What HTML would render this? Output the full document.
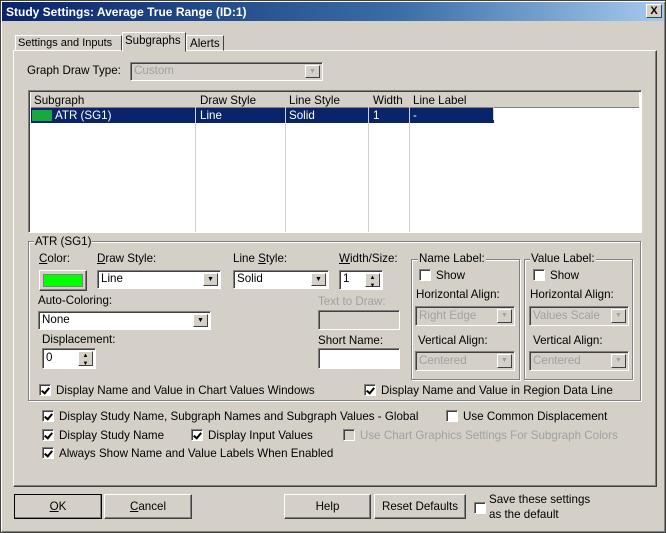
<!DOCTYPE html><html><head><style>
*{box-sizing:border-box;margin:0;padding:0}
body{width:666px;height:533px;background:#d4d0c8;font-family:"Liberation Sans",Arial,sans-serif;font-size:11.6px;color:#000;position:relative;overflow:hidden}
.a{position:absolute;white-space:nowrap}
.win{position:absolute;left:0;top:0;width:666px;height:533px;border:1px solid #404040;box-shadow:inset 1px 1px #fff,inset -1px -1px #808080}
.title{left:2px;top:2px;width:662px;height:19px;background:linear-gradient(90deg,#0a246a,#3a6ea5 60%,#a6caf0);color:#fff;font-weight:bold;font-size:12px;padding:3px 4px}
.close{left:646px;top:4px;width:16px;height:14px;background:#d4d0c8;border:1px solid;border-color:#fff #404040 #404040 #fff;font-size:11px;font-weight:bold;text-align:center;line-height:12px}
.raised{border:1px solid;border-color:#fff #404040 #404040 #fff;box-shadow:inset -1px -1px #808080}
.sunk{background:#fff;border:1px solid;border-color:#808080 #fff #fff #808080;box-shadow:inset 1px 1px #404040;padding:2px 3px}
.dis{background:#d4d0c8;color:#a0a0a0}
.dd{position:absolute;right:2px;top:2px;bottom:2px;width:15px;background:#d4d0c8;border:1px solid;border-color:#fff #404040 #404040 #fff;font-size:7px;text-align:center;line-height:12px;color:#000}
.dis .dd{color:#a0a0a0}
.grp{border:1px solid #808080;box-shadow:1px 1px #fff,inset 1px 1px #fff}
.leg{background:#d4d0c8;padding:0 1px}
.cb{display:inline-block;position:relative;width:12px;height:12px;background:#fff;border:1px solid;border-color:#808080 #fff #fff #808080;box-shadow:inset 1px 1px #404040;vertical-align:-2px;margin-right:5px}
.cb.on::after{content:"";position:absolute;left:2px;top:1px;width:3px;height:6px;border:solid #000;border-width:0 2px 2px 0;transform:rotate(40deg);left:3px}
.btn{position:absolute;height:25px;text-align:center;line-height:23px;background:#d4d0c8;border:1px solid;border-color:#fff #404040 #404040 #fff;box-shadow:inset -1px -1px #808080}
.gray{color:#a0a0a0}
.col{position:absolute;top:0;bottom:0;border-left:1px solid #d4d0c8}
</style></head><body>
<div class="win"></div>
<div class="a title">Study Settings: Average True Range (ID:1)</div>
<div class="a close">X</div>
<div class="a raised" style="left:13px;top:50px;width:644px;height:437px"></div>
<div class="a" style="left:15px;top:35px;width:107px;height:16px;border:1px solid;border-color:#fff #404040 transparent #fff;padding:1px 2px;font-size:11px">Settings and Inputs</div>
<div class="a" style="left:122px;top:32px;width:64px;height:20px;border:1px solid;border-color:#fff #404040 transparent #fff;background:#d4d0c8;padding:2px 2px;font-size:11.5px">Subgraphs</div>
<div class="a" style="left:186px;top:35px;width:38px;height:16px;border:1px solid;border-color:#fff #404040 transparent #fff;padding:1px 3px">Alerts</div>
<div class="a" style="left:27px;top:64px">Graph Draw Type:</div>
<div class="a sunk dis" style="left:130px;top:62px;width:193px;height:19px;padding:1px 3px">Custom<div class="dd">▼</div></div>
<div class="a sunk" style="left:28px;top:90px;width:614px;height:143px;padding:0">
 <div class="a" style="left:2px;top:1px;width:608px;height:16px;background:#d4d0c8;border-bottom:1px solid #808080"></div>
 <div class="a" style="left:2px;top:17px;width:463px;height:15px;background:#0a246a"></div>
 <div class="a" style="left:3px;top:19px;width:20px;height:11px;background:#17a840"></div>
 <div class="col" style="left:166px;top:1px"></div><div class="col" style="left:256px;top:1px"></div><div class="col" style="left:339px;top:1px"></div><div class="col" style="left:380px;top:1px"></div><div class="col" style="left:464px;top:1px;bottom:112px"></div>
 <div class="a" style="left:5px;top:3px">Subgraph</div><div class="a" style="left:171px;top:3px">Draw Style</div><div class="a" style="left:260px;top:3px">Line Style</div><div class="a" style="left:344px;top:3px">Width</div><div class="a" style="left:384px;top:3px">Line Label</div>
 <div class="a" style="left:26px;top:18px;color:#fff">ATR (SG1)</div><div class="a" style="left:171px;top:18px;color:#fff">Line</div><div class="a" style="left:260px;top:18px;color:#fff">Solid</div><div class="a" style="left:344px;top:18px;color:#fff">1</div><div class="a" style="left:384px;top:18px;color:#fff">-</div>
</div>
<div class="a grp" style="left:28px;top:241px;width:613px;height:160px"></div>
<div class="a leg" style="left:34px;top:235px">ATR (SG1)</div>
<div class="a" style="left:39px;top:252px"><u>C</u>olor:</div>
<div class="a raised" style="left:39px;top:270px;width:48px;height:21px;padding:3px"><div style="background:#00ff00;width:100%;height:100%;border:1px solid #808080"></div></div>
<div class="a" style="left:97px;top:252px"><u>D</u>raw Style:</div>
<div class="a sunk" style="left:97px;top:270px;width:124px;height:19px;padding:1px 3px">Line<div class="dd">▼</div></div>
<div class="a" style="left:233px;top:252px">Line <u>S</u>tyle:</div>
<div class="a sunk" style="left:233px;top:270px;width:96px;height:19px;padding:1px 3px">Solid<div class="dd">▼</div></div>
<div class="a" style="left:339px;top:252px"><u>W</u>idth/Size:</div>
<div class="a sunk" style="left:339px;top:270px;width:44px;height:20px;padding:1px 3px">1<div class="dd" style="line-height:8px;font-size:6px">▲<br>▼</div></div>
<div class="a" style="left:38px;top:294px">Auto-Coloring:</div>
<div class="a sunk" style="left:38px;top:311px;width:173px;height:19px;padding:1px 3px">None<div class="dd">▼</div></div>
<div class="a gray" style="left:318px;top:295px">Text to Draw:</div>
<div class="a sunk dis" style="left:318px;top:310px;width:82px;height:20px"></div>
<div class="a" style="left:42px;top:333px">Displacement:</div>
<div class="a sunk" style="left:42px;top:348px;width:54px;height:21px;padding:2px 3px">0<div class="dd" style="line-height:8px;font-size:6px">▲<br>▼</div></div>
<div class="a" style="left:318px;top:334px">Short Name:</div>
<div class="a sunk" style="left:318px;top:348px;width:82px;height:21px"></div>
<div class="a grp" style="left:411px;top:259px;width:109px;height:121px"></div>
<div class="a leg" style="left:418px;top:252px">Name Label:</div>
<div class="a" style="left:419px;top:269px"><span class="cb"></span>Show</div>
<div class="a" style="left:416px;top:288px">Horizontal Align:</div>
<div class="a sunk dis" style="left:415px;top:306px;width:100px;height:20px;padding:2px 3px">Right Edge<div class="dd">▼</div></div>
<div class="a" style="left:418px;top:334px">Vertical Align:</div>
<div class="a sunk dis" style="left:415px;top:351px;width:100px;height:20px;padding:2px 3px">Centered<div class="dd">▼</div></div>
<div class="a grp" style="left:524px;top:259px;width:109px;height:121px"></div>
<div class="a leg" style="left:530px;top:252px">Value Label:</div>
<div class="a" style="left:533px;top:269px"><span class="cb"></span>Show</div>
<div class="a" style="left:530px;top:288px">Horizontal Align:</div>
<div class="a sunk dis" style="left:529px;top:306px;width:100px;height:20px;padding:2px 3px">Values Scale<div class="dd">▼</div></div>
<div class="a" style="left:533px;top:334px">Vertical Align:</div>
<div class="a sunk dis" style="left:529px;top:351px;width:100px;height:20px;padding:2px 3px">Centered<div class="dd">▼</div></div>
<div class="a" style="left:39px;top:384px"><span class="cb on"></span>Display Name and Value in Chart Values Windows</div>
<div class="a" style="left:364px;top:384px"><span class="cb on"></span>Display Name and Value in Region Data Line</div>
<div class="a" style="left:42px;top:410px"><span class="cb on"></span>Display Study Name, Subgraph Names and Subgraph Values - Global</div>
<div class="a" style="left:446px;top:410px"><span class="cb"></span>Use Common Displacement</div>
<div class="a" style="left:42px;top:429px"><span class="cb on"></span>Display Study Name</div>
<div class="a" style="left:191px;top:429px"><span class="cb on"></span>Display Input Values</div>
<div class="a gray" style="left:343px;top:429px"><span class="cb" style="background:#d4d0c8"></span>Use Chart Graphics Settings For Subgraph Colors</div>
<div class="a" style="left:42px;top:447px"><span class="cb on"></span>Always Show Name and Value Labels When Enabled</div>
<div class="btn" style="left:14px;top:494px;width:88px;border:1px solid #000;"><u>O</u>K</div>
<div class="btn" style="left:104px;top:494px;width:88px"><u>C</u>ancel</div>
<div class="btn" style="left:284px;top:494px;width:87px">Help</div>
<div class="btn" style="left:374px;top:494px;width:92px">Reset Defaults</div>
<div class="a cb" style="left:474px;top:502px"></div>
<div class="a" style="left:489px;top:492px;line-height:15px">Save these settings<br>as the default</div>
</body></html>
